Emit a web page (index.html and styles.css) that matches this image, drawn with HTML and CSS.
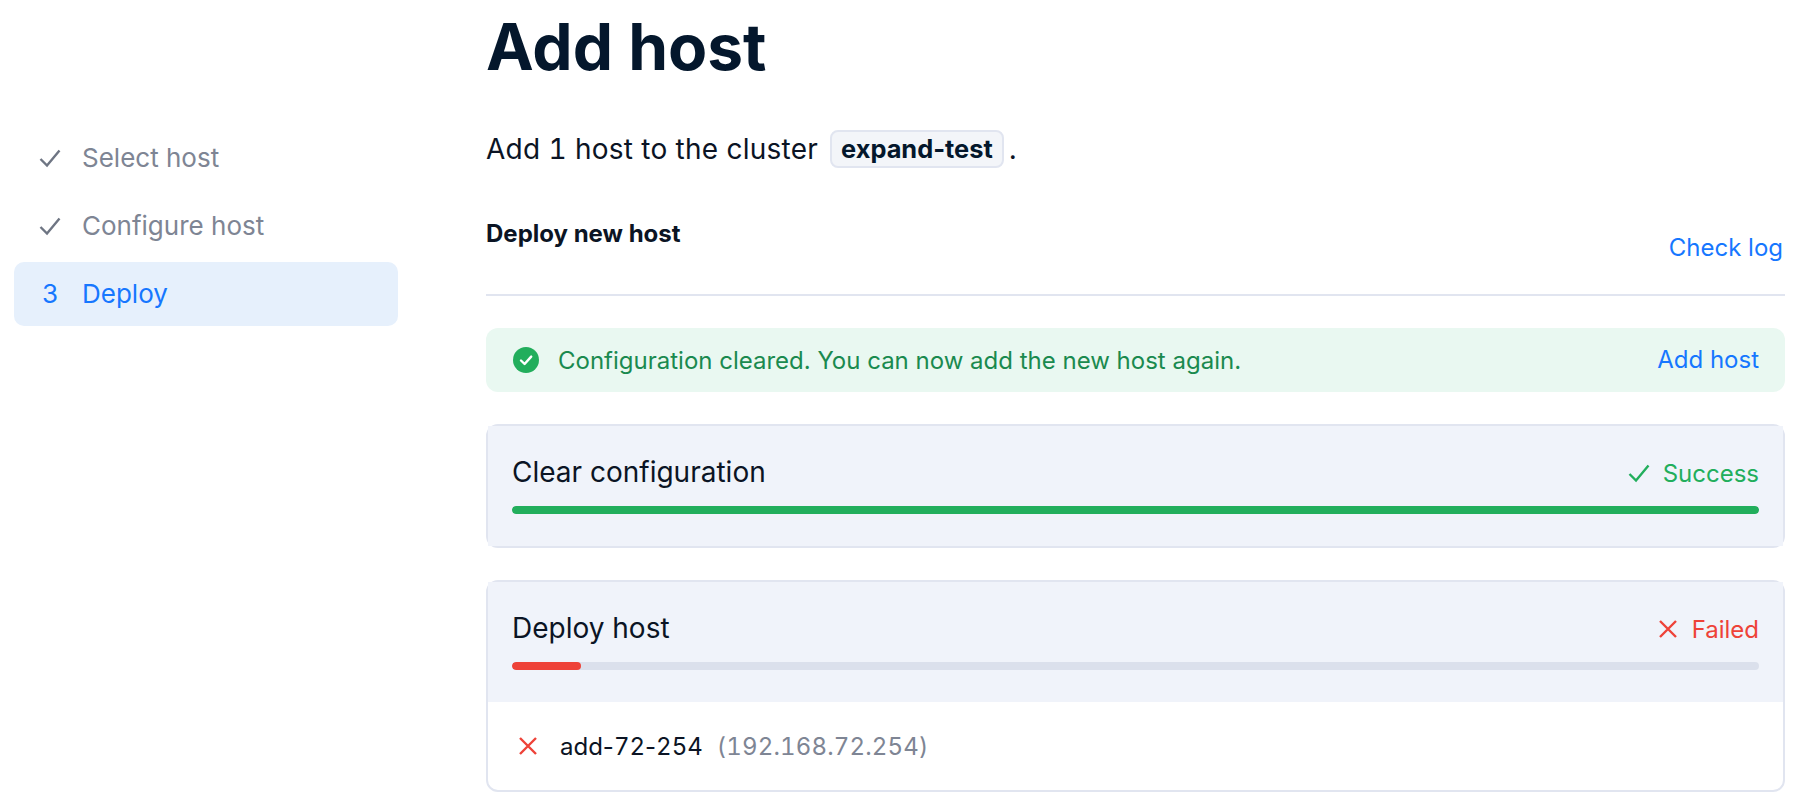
FILE: index.html
```html
<!DOCTYPE html>
<html lang="en">
<head>
<meta charset="utf-8">
<title>Add host</title>
<link rel="stylesheet" href="styles.css">
</head>
<body>
<div class="page">
  <nav class="steps">
    <div class="step done">
      <span class="step-mark"><svg class="icon-sm" viewBox="0 0 24 24"><path d="M2.5 13 9 19.5 21.5 4.5"/></svg></span>
      <span>Select host</span>
    </div>
    <div class="step done">
      <span class="step-mark"><svg class="icon-sm" viewBox="0 0 24 24"><path d="M2.5 13 9 19.5 21.5 4.5"/></svg></span>
      <span>Configure host</span>
    </div>
    <div class="step active">
      <span class="step-mark">3</span>
      <span>Deploy</span>
    </div>
  </nav>
  <main class="main">
    <h1 class="title">Add host</h1>
    <p class="desc"><span>Add <span class="num">1</span> host to the cluster</span><code class="tag">expand-test</code><span>.</span></p>
    <div class="section-head">
      <h2 class="section-title">Deploy new host</h2>
      <a class="link log-link">Check log</a>
    </div>
    <div class="alert">
      <svg class="alert-icon" viewBox="0 0 26 26"><circle cx="13" cy="13" r="13" fill="#22ae5c"/><path d="M8 13.5 11.6 17 18.2 9.6" fill="none" stroke="#fff" stroke-width="2.4" stroke-linecap="round" stroke-linejoin="round"/></svg>
      <span class="alert-text">Configuration cleared. You can now add the new host again.</span>
      <a class="link">Add host</a>
    </div>
    <section class="card">
      <div class="card-head">
        <div class="card-row">
          <span class="card-title">Clear configuration</span>
          <span class="status ok"><svg class="icon-sm" viewBox="0 0 24 24"><path d="M2.5 13 9 19.5 21.5 4.5"/></svg>Success</span>
        </div>
        <div class="bar"><div class="fill fill-ok" style="width:100%"></div></div>
      </div>
    </section>
    <section class="card">
      <div class="card-head">
        <div class="card-row">
          <span class="card-title">Deploy host</span>
          <span class="status bad"><svg class="icon-sm" viewBox="0 0 24 24"><path d="M4 4 20 20M20 4 4 20"/></svg>Failed</span>
        </div>
        <div class="bar"><div class="fill fill-bad" style="width:5.5%"></div></div>
      </div>
      <div class="host-row">
        <svg class="icon-sm host-icon" viewBox="0 0 24 24"><path d="M4 4 20 20M20 4 4 20"/></svg>
        <span class="host-name">add-<span class="num">72</span>-<span class="num">254</span></span>
        <span class="host-ip num">(192.168.72.254)</span>
      </div>
    </section>
  </main>
</div>
</body>
</html>
```

FILE: styles.css
```css
* { box-sizing: border-box; }
html, body { margin: 0; height: 100%; background: #fff; overflow: hidden; }
body { font-family: Inter, "Liberation Sans", sans-serif; font-size: 24px; color: #0b1424; }
.num { font-feature-settings: "tnum"; }
.page { display: flex; gap: 88px; padding: 0 31px 0 14px; }

.steps { width: 384px; flex: none; padding-top: 126px; display: flex; flex-direction: column; gap: 4px; }
.step { height: 64px; display: flex; align-items: center; gap: 20px; padding-left: 24px; border-radius: 10px; font-size: 26px; line-height: 32px; color: #7e8594; }
.step-mark { width: 24px; display: flex; justify-content: center; }
.step.done .step-mark { color: #6e7583; }
.step.active { background: #e6f0fc; color: #1677ff; }

.icon-sm { width: 24px; height: 24px; fill: none; stroke: currentColor; stroke-width: 2.4; flex: none; }

.main { flex: 1; min-width: 0; }
.title { margin: 8px 0 0; font-size: 64px; line-height: 78px; font-weight: 700; color: #04172c; }
.desc { margin: 44px 0 0; height: 38px; display: flex; align-items: center; font-size: 28px; line-height: 38px; letter-spacing: 0.24px; color: #0b1424; }
.tag { margin: 0 5px 0 12px; padding: 0 9px; height: 38px; line-height: 34px; font-family: inherit; font-size: 25.4px; letter-spacing: 0; font-weight: 700; background: #f3f5f9; border: 2px solid #e1e5f0; border-radius: 8px; color: #04172c; }
.section-head { margin-top: 49px; height: 79px; display: flex; justify-content: space-between; align-items: flex-start; border-bottom: 2px solid #e1e5f0; }
.section-title { margin: 1px 0 0; font-size: 24px; line-height: 32px; font-weight: 700; color: #0b1424; }
.link { color: #1677ff; font-size: 24px; line-height: 32px; }
.log-link { margin: 15px 2px 0 0; }

.alert { margin-top: 32px; height: 64px; display: flex; align-items: center; padding: 0 26px 0 27px; border-radius: 12px; background: #e9f8f1; }
.alert-icon { width: 26px; height: 26px; flex: none; }
.alert-text { flex: 1; margin-left: 19px; color: #1a8a4f; }

.card { margin-top: 32px; border: 2px solid #e1e5f0; border-radius: 12px; }
.card-head { background: #f0f3fa; padding: 24px 24px 32px; }
.card-row { height: 44px; display: flex; align-items: center; justify-content: space-between; }
.card-title { font-size: 28px; line-height: 36px; }
.status { display: flex; align-items: center; gap: 12px; margin-top: 2px; }
.ok { color: #22ae5c; }
.bad { color: #ee4238; }
.bar { margin-top: 12px; height: 8px; border-radius: 4px; background: #dbe0ec; overflow: hidden; }
.fill { height: 100%; border-radius: 4px; }
.fill-ok { background: #22ae5c; }
.fill-bad { background: #ee4238; }

.host-row { height: 88px; display: flex; align-items: center; padding-left: 28px; }
.host-icon { color: #ee4238; }
.host-name { margin-left: 20px; }
.host-ip { margin-left: 14px; letter-spacing: 0.15px; color: #7e8594; }
```
